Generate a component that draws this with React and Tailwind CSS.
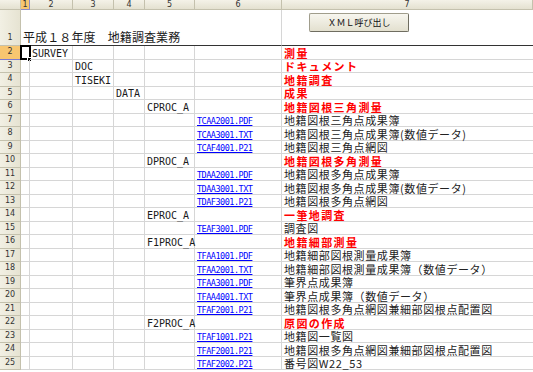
import React from "react";

const GRID = "grid grid-cols-[21px_9px_43px_41px_31px_50px_87px_1fr]";
const JP = { fontFamily: '"Noto Sans CJK JP", "Noto Sans", sans-serif' };
const MONO = { fontFamily: '"DejaVu Sans Mono", "Liberation Mono", "Noto Sans CJK JP", monospace' };

// each row: either a tree node (col 2-5) with a red heading, or a file link with a caption
const rows = [
  { n: 2, col: 2, code: "SURVEY", desc: "測量" },
  { n: 3, col: 3, code: "DOC", desc: "ドキュメント" },
  { n: 4, col: 3, code: "TISEKI", desc: "地籍調査" },
  { n: 5, col: 4, code: "DATA", desc: "成果" },
  { n: 6, col: 5, code: "CPROC_A", desc: "地籍図根三角測量" },
  { n: 7, link: "TCAA2001.PDF", desc: "地籍図根三角点成果簿" },
  { n: 8, link: "TCAA3001.TXT", desc: "地籍図根三角点成果簿(数値データ)" },
  { n: 9, link: "TCAF4001.P21", desc: "地籍図根三角点網図" },
  { n: 10, col: 5, code: "DPROC_A", desc: "地籍図根多角測量" },
  { n: 11, link: "TDAA2001.PDF", desc: "地籍図根多角点成果簿" },
  { n: 12, link: "TDAA3001.TXT", desc: "地籍図根多角点成果簿(数値データ)" },
  { n: 13, link: "TDAF3001.P21", desc: "地籍図根多角点網図" },
  { n: 14, col: 5, code: "EPROC_A", desc: "一筆地調査" },
  { n: 15, link: "TEAF3001.PDF", desc: "調査図" },
  { n: 16, col: 5, code: "F1PROC_A", desc: "地籍細部測量" },
  { n: 17, link: "TFAA1001.PDF", desc: "地籍細部図根測量成果簿" },
  { n: 18, link: "TFAA2001.TXT", desc: "地籍細部図根測量成果簿（数値データ）" },
  { n: 19, link: "TFAA3001.PDF", desc: "筆界点成果簿" },
  { n: 20, link: "TFAA4001.TXT", desc: "筆界点成果簿（数値データ）" },
  { n: 21, link: "TFAF2001.P21", desc: "地籍図根多角点網図兼細部図根点配置図" },
  { n: 22, col: 5, code: "F2PROC_A", desc: "原図の作成" },
  { n: 23, link: "TFAF1001.P21", desc: "地籍図一覧図" },
  { n: 24, link: "TFAF2001.P21", desc: "地籍図根多角点網図兼細部図根点配置図" },
  { n: 25, link: "TFAF2002.P21", desc: "番号図W22_53" },
];

function HeaderCell({ children, active }) {
  return (
    <div
      className={`flex items-center justify-center border-r border-b text-[8px] leading-none text-[#333] ${
        active
          ? "bg-[#f8c670] border-[#8c8ac8]"
          : "bg-gradient-to-b from-[#f4f2e8] to-[#e4e1d0] border-[#c4c1ad]"
      }`}
      style={{ fontFamily: '"DejaVu Sans", sans-serif' }}
    >
      {children}
    </div>
  );
}

function RowHead({ n, active }) {
  return (
    <div
      className={`flex items-center justify-center border-r border-b text-[8px] leading-none text-[#333] ${
        active
          ? "bg-[#f8c670] border-r-[#c4c1ad] border-b-[#7c7ad0]"
          : "bg-gradient-to-r from-[#f2f0e4] to-[#e6e3d2] border-[#c4c1ad]"
      }`}
      style={{ fontFamily: '"DejaVu Sans", sans-serif' }}
    >
      {n}
    </div>
  );
}

function DataRow({ row }) {
  const cells = [];
  for (let c = 1; c <= 7; c++) {
    let content = null;
    if (row.col === c) {
      content = (
        <span className="inline-block text-[10px] leading-[11px] text-[#1a1a1a]" style={MONO}>
          {row.code}
        </span>
      );
    } else if (c === 6 && row.link) {
      content = (
        <span
          className="inline-block text-[8.5px] leading-[10px] tracking-[-0.5px] text-[#0000ff] underline"
          style={MONO}
        >
          {row.link}
        </span>
      );
    } else if (c === 7) {
      content = (
        <span
          className={`inline-block text-[11px] leading-[12px] ${
            row.code ? "font-bold tracking-[1.4px] text-[#ff0000]" : "tracking-[0.6px] text-[#222]"
          }`}
          style={JP}
        >
          {row.desc}
        </span>
      );
    }
    cells.push(
      <div
        key={c}
        className={`relative flex items-end overflow-visible whitespace-nowrap border-b border-[#d6d6d6] pl-[2px] ${
          c < 7 ? "border-r" : ""
        }`}
      >
        {content}
        {row.n === 2 && c === 1 && (
          <>
            <div className="absolute -left-[1px] -top-[1px] h-[15px] w-[11px] border-2 border-black" />
            <div className="absolute -bottom-[3px] -right-[3px] h-[5px] w-[5px] border border-white bg-black" />
          </>
        )}
      </div>
    );
  }
  return (
    <div className={`${GRID} h-[13.5px]`}>
      <RowHead n={row.n} active={row.n === 2} />
      {cells}
    </div>
  );
}

export default function App() {
  return (
    <div className="h-[372px] w-[533px] overflow-hidden bg-white">
      {/* column headers */}
      <div className={`${GRID} h-[10px]`}>
        <HeaderCell />
        <HeaderCell active>1</HeaderCell>
        <HeaderCell>2</HeaderCell>
        <HeaderCell>3</HeaderCell>
        <HeaderCell>4</HeaderCell>
        <HeaderCell>5</HeaderCell>
        <HeaderCell>6</HeaderCell>
        <HeaderCell>7</HeaderCell>
      </div>

      {/* row 1: merged title + button */}
      <div className={`${GRID} h-[36px]`}>
        <div className="flex items-end justify-center border-r border-b border-[#c4c1ad] bg-gradient-to-r from-[#f2f0e4] to-[#e6e3d2] pb-[3px] text-[8px] leading-none text-[#333]" style={{ fontFamily: '"DejaVu Sans", sans-serif' }}>
          1
        </div>
        <div className="col-span-6 flex items-end border-r border-b border-r-[#d6d6d6] border-b-[#333] pb-[1px] pl-[2px]">
          <span className="inline-block whitespace-nowrap text-[12px] leading-[14px] tracking-[0.1px] text-[#1a1a1a]" style={JP}>
            平成１８年度　地籍調査業務
          </span>
        </div>
        <div className="border-b border-[#333] pl-[27px] pt-[3px]">
          <div
            className="flex h-[19px] w-[100px] items-center justify-center rounded-[2px] border border-[#a09d8c] border-b-[#6f6d60] border-r-[#6f6d60] bg-gradient-to-b from-[#f7f6ef] to-[#e3e0cf] text-[9px] text-[#111]"
            style={JP}
          >
            ＸＭＬ呼び出し
          </div>
        </div>
      </div>

      {rows.map((r) => (
        <DataRow key={r.n} row={r} />
      ))}
    </div>
  );
}
